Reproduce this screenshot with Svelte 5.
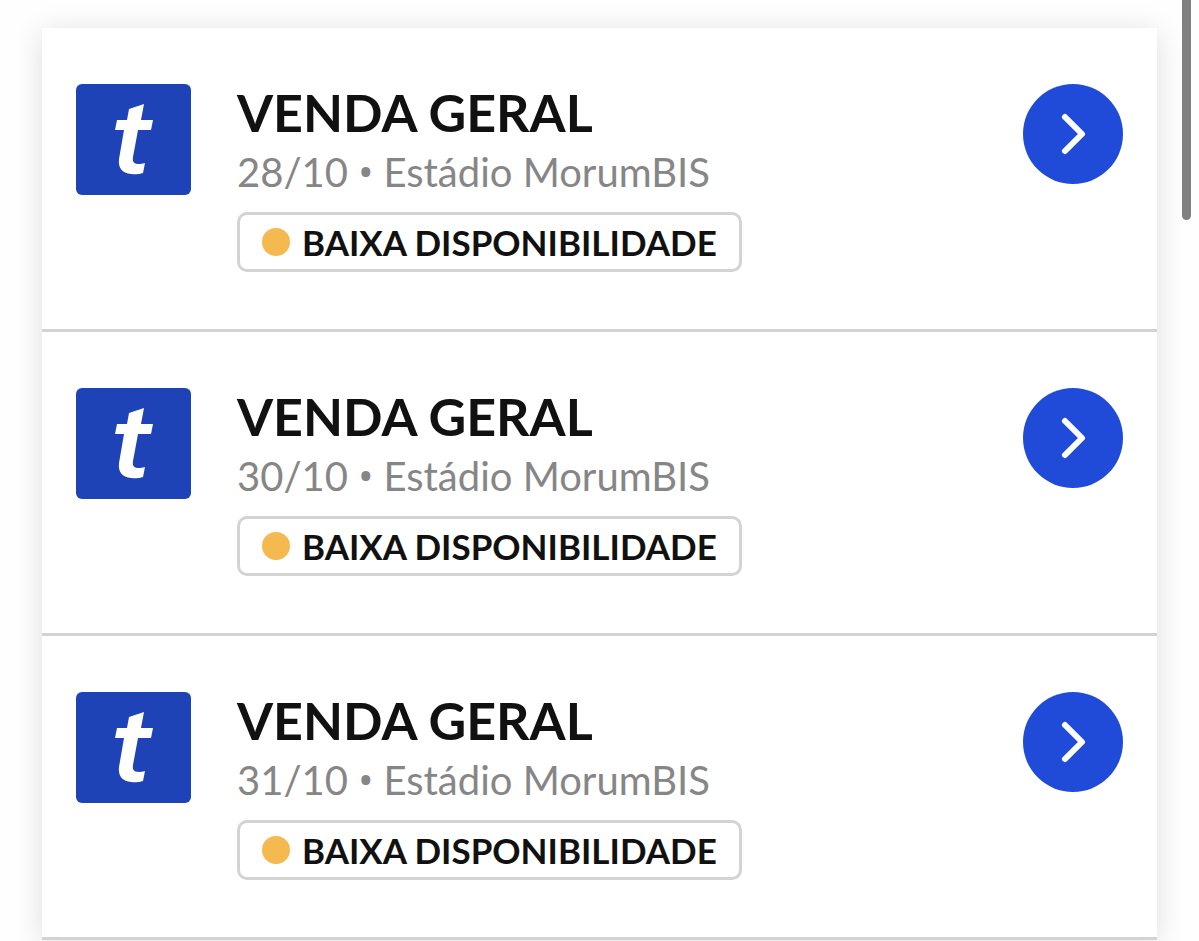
<script lang="ts">
  interface EventSession {
    id: number;
    title: string;
    date: string;
    venue: string;
    availability: string;
  }

  const sessions: EventSession[] = [
    {
      id: 1,
      title: 'VENDA GERAL',
      date: '28/10',
      venue: 'Estádio MorumBIS',
      availability: 'BAIXA DISPONIBILIDADE'
    },
    {
      id: 2,
      title: 'VENDA GERAL',
      date: '30/10',
      venue: 'Estádio MorumBIS',
      availability: 'BAIXA DISPONIBILIDADE'
    },
    {
      id: 3,
      title: 'VENDA GERAL',
      date: '31/10',
      venue: 'Estádio MorumBIS',
      availability: 'BAIXA DISPONIBILIDADE'
    }
  ];
</script>

<main class="page">
  <ul class="session-list">
    {#each sessions as session (session.id)}
      <li class="session">
        <svg class="logo" viewBox="0 0 115 111" aria-hidden="true">
          <rect width="115" height="111" rx="6" fill="#1e43b6" />
          <path
            d="M53 25 L68 20 L65 36 H77 L75 46 H62 L57 73 C56 79 59 80 63 80 Q66 80 69 79 L67 89 Q62 91 55 90 C46 89 42 84 43 75 L48 46 H39 L41 36 H51 Z"
            fill="#fff"
          />
        </svg>

        <div class="session-info">
          <h2>{session.title}</h2>
          <p class="session-place">
            {session.date} <span class="bullet">•</span> {session.venue}
          </p>
          <div class="availability">
            <span class="availability-dot"></span>
            <span>{session.availability}</span>
          </div>
        </div>

        <a class="session-link" href="#sessao-{session.id}" aria-label="{session.title} {session.date}">
          <svg viewBox="0 0 100 100" fill="none" aria-hidden="true">
            <path
              d="M42 33 L59 50 L42 67"
              stroke="#fff"
              stroke-width="6"
              stroke-linecap="round"
              stroke-linejoin="round"
            />
          </svg>
        </a>
      </li>
    {/each}
  </ul>
  <div class="scroll-thumb"></div>
</main>

<style>
  :global(body) {
    margin: 0;
    background: #fefefe;
  }

  .page {
    position: relative;
    box-sizing: border-box;
    min-height: 100vh;
    padding: 28px 42px 0;
    overflow: hidden;
    font-family: Lato, 'Open Sans', sans-serif;
    color: #111;
  }

  .session-list {
    margin: 0;
    padding: 0;
    list-style: none;
    background: #fff;
    box-shadow: 0 4px 28px rgba(0, 0, 0, 0.13);
  }

  .session {
    display: flex;
    align-items: flex-start;
    gap: 46px;
    padding: 56px 34px 57px;
    border-bottom: 3px solid #d3d3d3;
  }

  .logo {
    flex-shrink: 0;
    width: 115px;
    height: 111px;
  }

  .session-info {
    flex: 1;
    min-width: 0;
  }

  h2 {
    margin: 0;
    font-size: 52px;
    font-weight: 700;
    line-height: 56px;
  }

  .session-place {
    margin: 0 0 8px;
    color: #868686;
    font-size: 40px;
    line-height: 64px;
  }

  .bullet {
    font-family: 'Noto Sans', sans-serif;
    line-height: 1;
  }

  .availability {
    display: inline-flex;
    align-items: center;
    gap: 12px;
    box-sizing: border-box;
    height: 60px;
    padding: 0 22px;
    border: 3px solid #d3d3d3;
    border-radius: 10px;
    font-size: 35px;
    font-weight: 700;
    line-height: 40px;
    vertical-align: top;
  }

  .availability-dot {
    width: 28px;
    height: 28px;
    border-radius: 50%;
    background: #f4b94f;
  }

  .session-link {
    flex-shrink: 0;
    width: 100px;
    height: 100px;
    border-radius: 50%;
    background: #1f4bd8;
  }

  .session-link svg {
    display: block;
  }

  .scroll-thumb {
    position: absolute;
    top: 0;
    right: 8px;
    width: 9px;
    height: 220px;
    border-radius: 0 0 5px 5px;
    background: #808080;
  }
</style>
